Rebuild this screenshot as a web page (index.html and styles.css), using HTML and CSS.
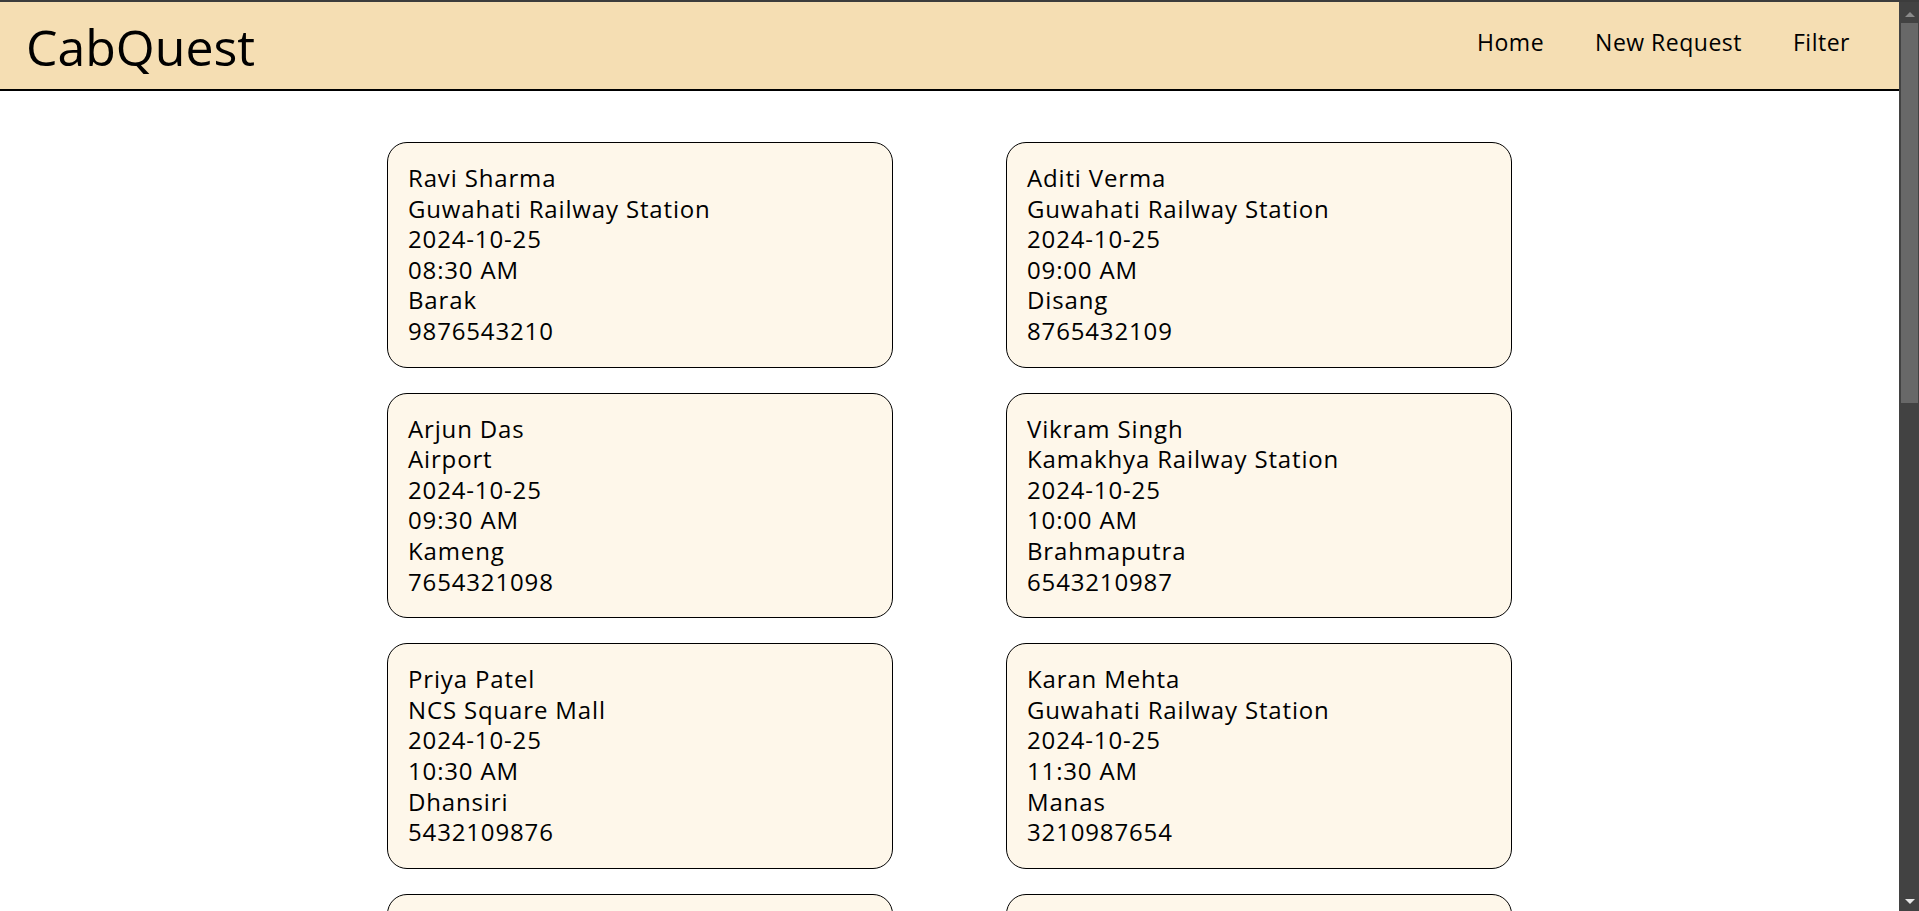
FILE: index.html
```html
<!DOCTYPE html>
<html lang="en">
<head>
<meta charset="utf-8">
<title>CabQuest</title>
<link rel="stylesheet" href="styles.css">
</head>
<body>
<div class="topline"></div>
<div class="frame">
  <div class="scroller">
    <header class="navbar">
      <div class="logo">CabQuest</div>
      <nav class="links">
        <a href="#" class="link">Home</a>
        <a href="#" class="link">New Request</a>
        <a href="#" class="link">Filter</a>
      </nav>
    </header>
    <main class="grid">
      <div class="card"><p>Ravi Sharma</p><p>Guwahati Railway Station</p><p>2024-10-25</p><p>08:30 AM</p><p>Barak</p><p>9876543210</p></div>
      <div class="card"><p>Aditi Verma</p><p>Guwahati Railway Station</p><p>2024-10-25</p><p>09:00 AM</p><p>Disang</p><p>8765432109</p></div>
      <div class="card"><p>Arjun Das</p><p>Airport</p><p>2024-10-25</p><p>09:30 AM</p><p>Kameng</p><p>7654321098</p></div>
      <div class="card"><p>Vikram Singh</p><p>Kamakhya Railway Station</p><p>2024-10-25</p><p>10:00 AM</p><p>Brahmaputra</p><p>6543210987</p></div>
      <div class="card"><p>Priya Patel</p><p>NCS Square Mall</p><p>2024-10-25</p><p>10:30 AM</p><p>Dhansiri</p><p>5432109876</p></div>
      <div class="card"><p>Karan Mehta</p><p>Guwahati Railway Station</p><p>2024-10-25</p><p>11:30 AM</p><p>Manas</p><p>3210987654</p></div>
      <div class="card card-empty"></div>
      <div class="card card-empty"></div>
    </main>
  </div>
  <div class="scrollbar" aria-hidden="true">
    <div class="sb-btn"><span class="arrow-up"></span></div>
    <div class="sb-track"><div class="sb-thumb"></div></div>
    <div class="sb-btn"><span class="arrow-down"></span></div>
  </div>
</div>
</body>
</html>
```
FILE: styles.css
```css
html, body {
  margin: 0;
  height: 100%;
  overflow: hidden;
  background: #ffffff;
}

body {
  display: flex;
  flex-direction: column;
  font-family: "Open Sans", "Noto Sans", sans-serif;
  color: #000000;
}

.topline {
  height: 2px;
  flex: none;
  background: #3c3c3c;
}

.frame {
  flex: 1;
  display: flex;
  min-height: 0;
}

.scroller {
  flex: 1;
  overflow: hidden;
  background: #ffffff;
}

.scrollbar {
  width: 20px;
  flex: none;
  display: flex;
  flex-direction: column;
  background: #424242;
}

.sb-btn {
  height: 21px;
  flex: none;
  display: flex;
  align-items: center;
  justify-content: center;
}

.arrow-up {
  width: 0;
  height: 0;
  border-left: 5px solid transparent;
  border-right: 5px solid transparent;
  border-bottom: 5px solid #8a8a8a;
  margin-left: 1px;
  margin-top: 4px;
}

.arrow-down {
  width: 0;
  height: 0;
  border-left: 5px solid transparent;
  border-right: 5px solid transparent;
  border-top: 5px solid #e6e6e6;
  margin-left: 1px;
  margin-top: 2px;
}

.sb-track {
  flex: 1;
  display: flex;
  flex-direction: column;
}

.sb-thumb {
  height: 380px;
  margin: 0 1px 0 2px;
  background: #686868;
}

.navbar {
  height: 87px;
  background: #f5deb3;
  border-bottom: 2px solid #000000;
  display: flex;
  align-items: center;
  justify-content: space-between;
  padding: 0 26px 0 26px;
}

.logo {
  font-size: 50px;
  line-height: 1;
  padding-top: 2px;
}

.links {
  display: flex;
  gap: 51px;
  padding-right: 23px;
  padding-bottom: 8px;
}

.link {
  font-size: 23px;
  letter-spacing: 0.5px;
  color: #000000;
  text-decoration: none;
}

.grid {
  display: grid;
  grid-template-columns: 506px 506px;
  column-gap: 113px;
  row-gap: 25px;
  justify-content: center;
  padding: 51px 0 40px;
}

.card {
  background: #fef7ea;
  border: 1px solid #000000;
  border-radius: 20px;
  padding: 20px 16px 20px 20px;
}

.card-empty {
  height: 183.6px;
}

.card p {
  margin: 0;
  font-size: 24px;
  line-height: 30.6px;
  letter-spacing: 0.85px;
}
```
